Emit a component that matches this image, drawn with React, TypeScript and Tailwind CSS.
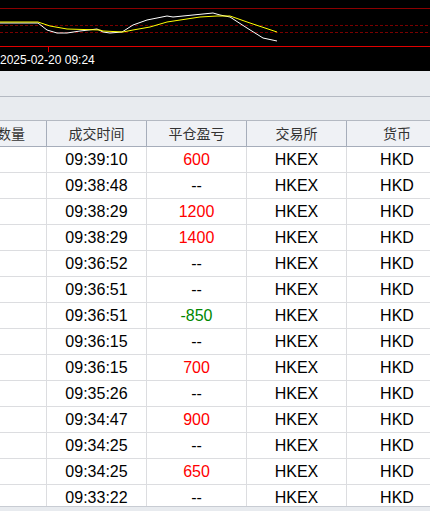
import React from 'react';

type Trade = { time: string; pnl: string; tone?: 'up' | 'down' };

const trades: Trade[] = [
  { time: '09:39:10', pnl: '600', tone: 'up' },
  { time: '09:38:48', pnl: '--' },
  { time: '09:38:29', pnl: '1200', tone: 'up' },
  { time: '09:38:29', pnl: '1400', tone: 'up' },
  { time: '09:36:52', pnl: '--' },
  { time: '09:36:51', pnl: '--' },
  { time: '09:36:51', pnl: '-850', tone: 'down' },
  { time: '09:36:15', pnl: '--' },
  { time: '09:36:15', pnl: '700', tone: 'up' },
  { time: '09:35:26', pnl: '--' },
  { time: '09:34:47', pnl: '900', tone: 'up' },
  { time: '09:34:25', pnl: '--' },
  { time: '09:34:25', pnl: '650', tone: 'up' },
  { time: '09:33:22', pnl: '--' },
];

const yellowPts =
  '0,22 38,22 50,26 67,29 100,30 103,31 123,32 133,30 150,27 167,22 200,17 217,16 230,16 250,23 277,32';
const whitePts =
  '0,23 38,23 47,30 57,33 67,33 80,31 97,29 103,32 110,33 122,32 133,25 147,20 167,16 173,17 193,15 213,13 220,15 230,17 247,28 263,38 277,41';

function MiniChart() {
  return (
    <div className="relative h-[71px] bg-black">
      <svg className="block" width={430} height={71} viewBox="0 0 430 71" shapeRendering="crispEdges">
        <line x1={0} y1={8.5} x2={430} y2={8.5} stroke="#8b0000" strokeWidth={1} />
        <line x1={0} y1={25.5} x2={430} y2={25.5} stroke="#7a0000" strokeWidth={1} strokeDasharray="3 2" />
        <line x1={0} y1={32.5} x2={430} y2={32.5} stroke="#7a0000" strokeWidth={1} strokeDasharray="3 2" />
        <line x1={0} y1={46.5} x2={430} y2={46.5} stroke="#e00000" strokeWidth={1} />
        <line x1={48.5} y1={46} x2={48.5} y2={52} stroke="#e00000" strokeWidth={1} />
        <polyline points={whitePts} fill="none" stroke="#ffffff" strokeWidth={1} shapeRendering="auto" />
        <polyline points={yellowPts} fill="none" stroke="#ffff00" strokeWidth={1} shapeRendering="auto" />
      </svg>
      <span className="absolute left-0 top-[52px] text-[12px] leading-[16px] text-white font-['Liberation_Sans',Arial,sans-serif]">
        2025-02-20 09:24
      </span>
    </div>
  );
}

export default function App() {
  return (
    <div className="w-[430px] h-[511px] overflow-hidden flex flex-col bg-white font-['Liberation_Sans','Noto_Sans_CJK_SC',sans-serif]">
      <MiniChart />

      {/* toolbar strips */}
      <div className="h-[26px] bg-[#e8ebef] border-b border-[#b4b9c2]" />
      <div className="h-[24px] bg-[#e8ebef] border-b border-[#b4b9c2]" />

      {/* header */}
      <div className="flex h-[26px] bg-[#eff1f5] border-b border-[#a6adba] text-[14px] text-[#333] font-['Noto_Sans_CJK_SC',sans-serif] shrink-0 whitespace-nowrap">
        <div className="w-[47px] shrink-0 border-r border-[#a6adba] flex items-center pr-[21px] justify-end overflow-visible">数量</div>
        <div className="w-[100px] shrink-0 border-r border-[#a6adba] flex items-center justify-center">成交时间</div>
        <div className="w-[100px] shrink-0 border-r border-[#a6adba] flex items-center justify-center">平仓盈亏</div>
        <div className="w-[100px] shrink-0 border-r border-[#a6adba] flex items-center justify-center">交易所</div>
        <div className="w-[100px] shrink-0 flex items-center justify-center">货币</div>
      </div>

      {/* rows */}
      <div className="flex-1 min-h-0 overflow-hidden">
        {trades.map((t, i) => (
          <div key={i} className="flex h-[26px] border-b border-[#dcdde0] text-[16px] text-black">
            <div className="w-[47px] shrink-0 border-r border-[#dcdde0]" />
            <div className="w-[100px] shrink-0 border-r border-[#dcdde0] flex items-center justify-center">{t.time}</div>
            <div
              className={`w-[100px] shrink-0 border-r border-[#dcdde0] flex items-center justify-center ${
                t.tone === 'up' ? 'text-[#ff0000]' : t.tone === 'down' ? 'text-[#008800]' : 'text-black'
              }`}
            >
              {t.pnl}
            </div>
            <div className="w-[100px] shrink-0 border-r border-[#dcdde0] flex items-center justify-center">HKEX</div>
            <div className="w-[100px] shrink-0 flex items-center justify-center">HKD</div>
          </div>
        ))}
      </div>

      {/* scrollbar edge */}
      <div className="h-[5px] shrink-0 bg-[#e8ebef] border-t border-[#c8ccd3]" />
    </div>
  );
}
